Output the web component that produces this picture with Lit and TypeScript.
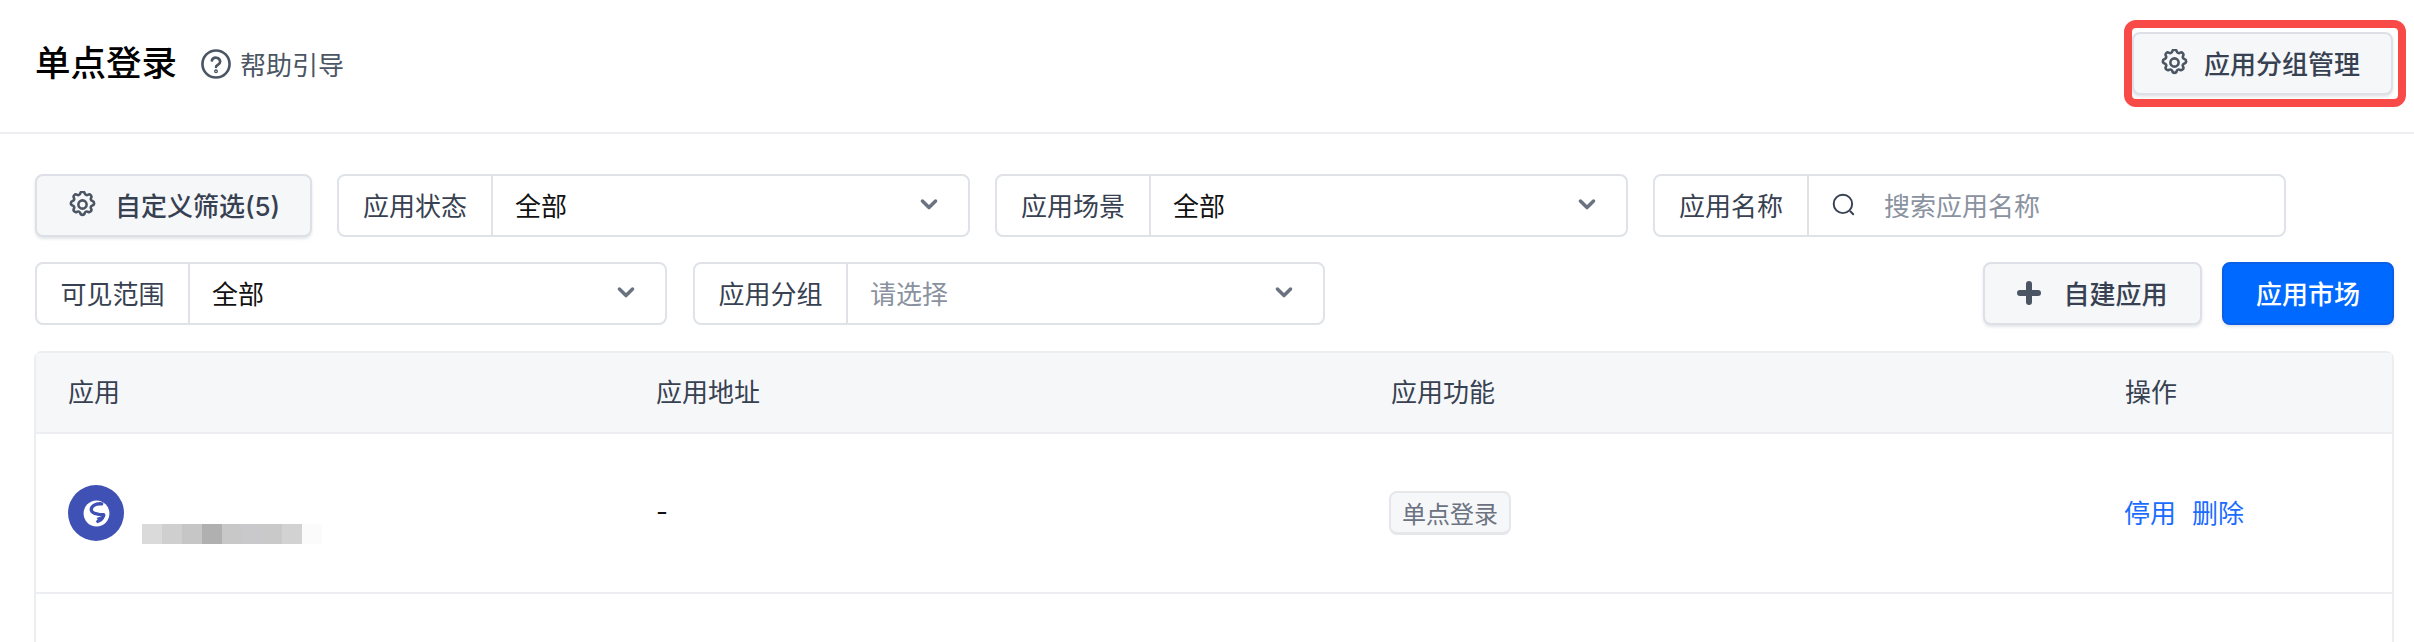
import { LitElement, html, css } from 'lit';
import { customElement } from 'lit/decorators.js';

const gear = html`<svg class="ico" viewBox="1.5 1.5 21 21" fill="none" stroke="currentColor" stroke-width="2" stroke-linecap="round" stroke-linejoin="round">
  <path d="M10.3 3.3c.4-1.7 3-1.7 3.4 0a1.7 1.7 0 0 0 2.6 1.1c1.5-.9 3.3.8 2.4 2.4a1.7 1.7 0 0 0 1 2.5c1.8.5 1.8 3 0 3.4a1.7 1.7 0 0 0-1 2.6c.9 1.5-.9 3.3-2.4 2.4a1.7 1.7 0 0 0-2.6 1c-.4 1.8-3 1.8-3.4 0a1.7 1.7 0 0 0-2.6-1c-1.500.9-3.300-.9-2.400-2.400a1.700 1.700 0 0 0-1-2.600c-1.800-.4-1.800-2.900 0-3.400a1.700 1.700 0 0 0 1-2.500c-.9-1.600.9-3.300 2.400-2.400a1.700 1.700 0 0 0 2.600-1.100z"/>
  <circle cx="12" cy="12" r="3.2"/>
</svg>`;

const chevron = html`<svg class="chev" viewBox="0 0 20 20" fill="currentColor"><path d="M4 6a1.300 1.300 0 0 1 1.900 0L10 10l4.100-4A1.300 1.300 0 1 1 16 7.900l-5.050 5.050a1.300 1.300 0 0 1-1.900 0L4 7.900A1.300 1.300 0 0 1 4 6z"/></svg>`;

@customElement('app-root')
export class AppRoot extends LitElement {
  static styles = css`
    :host {
      display: block;
      height: 642px;
      overflow: hidden;
      background: #fff;
      font-family: "Inter", "Noto Sans CJK SC", sans-serif;
      color: #111;
    }

    .header {
      height: 134px;
      box-sizing: border-box;
      border-bottom: 2px solid #eceef2;
      display: flex;
      align-items: center;
      justify-content: space-between;
      padding: 0 21px 5px 35px;
    }

    .title-wrap {
      display: flex;
      align-items: center;
    }

    .title {
      font-size: 35.500px;
      font-weight: 500;
      color: #000;
      line-height: 48px;
    }

    .help {
      display: flex;
      align-items: center;
      gap: 9px;
      margin-left: 24px;
      font-size: 26px;
      color: #4b5563;
    }

    .help svg {
      width: 30px;
      height: 30px;
    }

    .annotated {
      position: relative;
    }

    /* red annotation box over the button */
    .annotated::after {
      content: "";
      position: absolute;
      left: -8px;
      right: -13px;
      top: -12px;
      bottom: -12px;
      border: 8px solid #f84b48;
      border-radius: 12px;
      pointer-events: none;
    }

    .btn {
      box-sizing: border-box;
      height: 63px;
      display: flex;
      align-items: center;
      justify-content: center;
      border: 2px solid #dde1e7;
      border-radius: 8px;
      background: #f6f7f9;
      color: #374151;
      font-family: inherit;
      font-size: 26px;
      font-weight: 500;
      box-shadow: 0 2px 3px rgba(60, 70, 90, 0.14);
      padding: 0 0 2px;
    }

    .btn .ico {
      width: 27px;
      height: 27px;
      color: #4b5563;
    }

    .manage {
      width: 261px;
      gap: 16px;
      padding-right: 4px;
    }

    .filters {
      padding: 40px 20px 0 35px;
      display: flex;
      flex-direction: column;
      gap: 25px;
    }

    .row {
      display: flex;
      gap: 25px;
    }

    .row.second {
      gap: 26px;
    }

    .custom {
      width: 277px;
      gap: 19px;
      padding-left: 2px;
    }

    .field {
      box-sizing: border-box;
      width: 633px;
      height: 63px;
      display: flex;
      align-items: stretch;
      border: 2px solid #dfe3e8;
      border-radius: 8px;
      font-size: 26px;
    }

    .second .field {
      width: 632px;
    }

    .field .label {
      box-sizing: border-box;
      flex: none;
      display: flex;
      align-items: center;
      justify-content: center;
      padding-bottom: 2px;
      color: #374151;
      border-right: 2px solid #dfe3e8;
      width: 154px;
    }

    .second .field .label {
      width: 153px;
    }

    .field .value {
      flex: 1;
      display: flex;
      align-items: center;
      justify-content: space-between;
      padding: 0 26px 2px 22px;
      color: #111;
    }

    .placeholder {
      color: #8a92a0;
    }

    .chev {
      width: 26px;
      height: 26px;
      color: #6b7280;
    }

    .search .value {
      justify-content: flex-start;
      gap: 27px;
      padding-left: 22px;
    }

    .search svg {
      width: 26px;
      height: 26px;
      color: #374151;
    }

    .actions {
      margin-left: auto;
      display: flex;
      gap: 20px;
    }

    .create {
      width: 219px;
      gap: 22px;
    }

    .create svg {
      width: 24px;
      height: 24px;
      color: #4b5563;
    }

    .market {
      width: 172px;
      background: #0069ff;
      border-color: #0a5fe8;
      color: #fff;
    }

    .table {
      margin: 26px 20px 0 34px;
      border: 2px solid #eceef2;
      border-bottom: none;
      border-radius: 8px 8px 0 0;
      height: 400px;
    }

    .tr {
      display: grid;
      grid-template-columns: 588px 735px 734px 1fr;
      align-items: center;
      padding-left: 32px;
      font-size: 26px;
    }

    .thead {
      box-sizing: content-box;
      height: 75px;
      padding-bottom: 4px;
      background: #f6f7f9;
      border-bottom: 2px solid #eceef2;
      color: #374151;
    }

    .tbody {
      height: 158px;
      border-bottom: 2px solid #eceef2;
    }

    .app {
      display: flex;
      align-items: center;
      gap: 18px;
    }

    .app-icon {
      width: 56px;
      height: 56px;
      border-radius: 50%;
      background: #3f51b5;
      display: flex;
      align-items: center;
      justify-content: center;
      flex: none;
    }

    .app-icon svg {
      width: 31px;
      height: 31px;
    }

    /* pixelated name, blurred out in the original */
    .blurred {
      display: flex;
      align-self: flex-end;
      height: 20px;
      margin-bottom: -3px;
      filter: blur(0.6px);
    }

    .blurred i {
      display: block;
      width: 20px;
      height: 100%;
    }

    .raised {
      padding-bottom: 4px;
    }

    .tag {
      box-sizing: border-box;
      display: inline-flex;
      align-items: center;
      justify-content: center;
      width: 122px;
      height: 44px;
      margin-left: -2px;
      border: 2px solid #e5e7eb;
      border-bottom-width: 3px;
      border-radius: 8px;
      background: #f6f7f9;
      color: #6b7280;
      font-size: 24px;
    }

    .ops {
      display: flex;
      gap: 16px;
      margin-left: -1px;
      color: #1a6cff;
    }
  `;

  private field(label: string, value: string) {
    return html`<div class="field">
      <div class="label">${label}</div>
      <div class="value">
        <span class=${value === '请选择' ? 'placeholder' : ''}>${value}</span>
        ${chevron}
      </div>
    </div>`;
  }

  render() {
    const shades = ['#dadada', '#cfcfcf', '#c6c6c6', '#b0b0b0', '#c8c8c8', '#c9c9cb', '#c9c9c9', '#d2d2d2'];
    return html`
      <div class="header">
        <div class="title-wrap">
          <div class="title">单点登录</div>
          <div class="help">
            <svg viewBox="0.5 0.5 23 23" fill="none" stroke="currentColor" stroke-width="2" stroke-linecap="round">
              <circle cx="12" cy="12" r="10.4"/>
              <path d="M8.800 9.300a3.300 3.300 0 0 1 6.400 1c0 2.200-3.200 2.500-3.200 4"/>
              <circle cx="12" cy="17.600" r=".5"/>
            </svg>
            帮助引导
          </div>
        </div>
        <div class="annotated">
          <button class="btn manage">${gear}应用分组管理</button>
        </div>
      </div>

      <div class="filters">
        <div class="row">
          <button class="btn custom">${gear}自定义筛选(5)</button>
          ${this.field('应用状态', '全部')}
          ${this.field('应用场景', '全部')}
          <div class="field search">
            <div class="label">应用名称</div>
            <div class="value">
              <svg viewBox="0 0 24 24" fill="none" stroke="currentColor" stroke-width="1.800" stroke-linecap="round">
                <circle cx="11" cy="11" r="8.500"/><path d="M18 18l2.500 2.500"/>
              </svg>
              <span class="placeholder">搜索应用名称</span>
            </div>
          </div>
        </div>
        <div class="row second">
          ${this.field('可见范围', '全部')}
          ${this.field('应用分组', '请选择')}
          <div class="actions">
            <button class="btn create">
              <svg viewBox="0 0 24 24" fill="currentColor"><path d="M9 3a3 3 0 0 1 6 0v6h6a3 3 0 0 1 0 6h-6v6a3 3 0 0 1-6 0v-6H3a3 3 0 0 1 0-6h6z"/></svg>
              自建应用
            </button>
            <button class="btn market">应用市场</button>
          </div>
        </div>
      </div>

      <div class="table">
        <div class="tr thead">
          <div>应用</div><div>应用地址</div><div>应用功能</div><div>操作</div>
        </div>
        <div class="tr tbody">
          <div class="app">
            <div class="app-icon">
              <svg viewBox="0 0 24 24">
                <circle cx="12" cy="12" r="10" fill="#fff"/>
                <path fill="none" stroke="#3f51b5" stroke-width="2.600" stroke-linecap="round" stroke-linejoin="round" d="M16 4.500C11 4 7.500 6.500 8 9.500c.4 2.500 3.500 2.700 6 3.200l3.500.3"/>
                <path fill="#3f51b5" d="M12 15.500l7-2.500c-.5 3-3 6-6.500 6.500l-1-1.500 1.500-1.500z"/>
              </svg>
            </div>
            <div class="blurred">
              ${shades.map((c) => html`<i style="background:${c}"></i>`)}
              <i style="background:#fbfbfb"></i>
            </div>
          </div>
          <div class="raised">-</div>
          <div><span class="tag">单点登录</span></div>
          <div class="ops raised"><span>停用</span><span>删除</span></div>
        </div>
      </div>
    `;
  }
}
